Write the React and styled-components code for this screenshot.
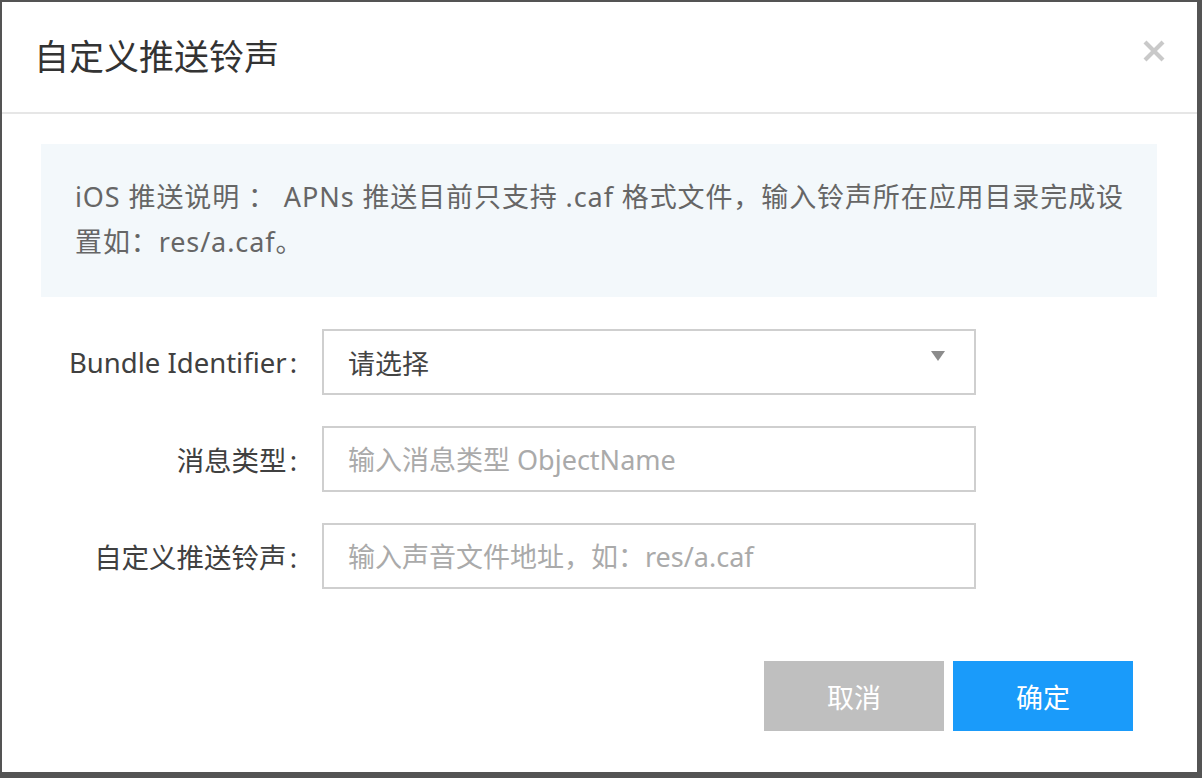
import React from 'react';
import styled, { createGlobalStyle } from 'styled-components';

const GlobalStyle = createGlobalStyle`
  html, body {
    margin: 0;
    padding: 0;
    background: #545454;
  }
  * {
    box-sizing: border-box;
  }
`;

const FONT = `"Noto Sans", "Noto Sans CJK SC", sans-serif`;

const Backdrop = styled.div`
  width: 1202px;
  height: 778px;
  padding: 2px 5px 6px 2px;
  background: #545454;
  font-family: ${FONT};
`;

const Modal = styled.div`
  width: 1195px;
  height: 770px;
  background: #fff;
  display: flex;
  flex-direction: column;
`;

const Header = styled.div`
  height: 112px;
  border-bottom: 2px solid #e6e6e6;
  display: flex;
  align-items: center;
  justify-content: space-between;
  padding: 0 32px 0 32px;
`;

const Title = styled.h2`
  margin: 0;
  font-size: 35px;
  font-weight: 400;
  color: #333;
  line-height: 1;
  padding-bottom: 2px;
`;

const CloseButton = styled.button`
  border: 0;
  background: none;
  padding: 0;
  width: 22px;
  height: 22px;
  margin-top: -12px;
  cursor: pointer;
  display: flex;
`;

const Body = styled.div`
  padding: 30px 40px 0 39px;
`;

const Notice = styled.div`
  background: #f3f8fb;
  padding: 30px 28px 33px 34px;
  font-size: 27px;
  line-height: 45px;
  letter-spacing: 0.9px;
  color: #666;
`;

const Form = styled.div`
  margin-top: 32px;
  display: flex;
  flex-direction: column;
  gap: 31px;
`;

const Row = styled.div`
  display: flex;
  align-items: center;
  gap: 25px;
`;

const Label = styled.label`
  width: 256px;
  text-align: right;
  font-size: 27.5px;
  color: #404040;
  white-space: nowrap;

  &::after {
    content: ':';
    margin-left: 3px;
  }
`;

const fieldBox = `
  width: 654px;
  height: 66px;
  border: 2px solid #cfcfcf;
  background: #fff;
  padding: 0 24px;
  font-size: 27px;
  font-family: ${FONT};
`;

const TextInput = styled.input`
  ${fieldBox}
  color: #333;
  outline: none;

  &::placeholder {
    color: #aaa;
  }
`;

const Select = styled.div`
  ${fieldBox}
  display: flex;
  align-items: center;
  justify-content: space-between;
  color: #444;
  padding-right: 29px;
  cursor: pointer;
`;

const Caret = styled.span`
  width: 0;
  height: 0;
  border-left: 7.5px solid transparent;
  border-right: 7.5px solid transparent;
  border-top: 10px solid #8c8c8c;
  margin-top: -12px;
`;

const Footer = styled.div`
  margin-top: 72px;
  display: flex;
  justify-content: flex-end;
  gap: 9px;
  padding-right: 24px;
`;

const Button = styled.button`
  width: 180px;
  height: 70px;
  border: 0;
  font-family: ${FONT};
  font-size: 27px;
  color: #fff;
  background: ${(p) => (p.$primary ? '#1a9bfa' : '#bfbfbf')};
  cursor: pointer;
`;

const App = () => {
    return (
        <>
            <GlobalStyle/>
            <Backdrop>
                <Modal>
                    <Header>
                        <Title>自定义推送铃声</Title>
                        <CloseButton aria-label="关闭">
                            <svg width="22" height="22" viewBox="0 0 22 22">
                                <path d="M2 2 L20 20 M20 2 L2 20" stroke="#c9c9c9" strokeWidth="4.2"/>
                            </svg>
                        </CloseButton>
                    </Header>
                    <Body>
                        <Notice>
                            iOS 推送说明 ： APNs 推送目前只支持 .caf 格式文件，输入铃声所在应用目录完成设置如：res/a.caf。
                        </Notice>
                        <Form>
                            <Row>
                                <Label>Bundle Identifier</Label>
                                <Select>
                                    <span>请选择</span>
                                    <Caret/>
                                </Select>
                            </Row>
                            <Row>
                                <Label>消息类型</Label>
                                <TextInput placeholder="输入消息类型 ObjectName"/>
                            </Row>
                            <Row>
                                <Label>自定义推送铃声</Label>
                                <TextInput placeholder="输入声音文件地址，如：res/a.caf"/>
                            </Row>
                        </Form>
                        <Footer>
                            <Button>取消</Button>
                            <Button $primary>确定</Button>
                        </Footer>
                    </Body>
                </Modal>
            </Backdrop>
        </>
    );
};

export default App;
